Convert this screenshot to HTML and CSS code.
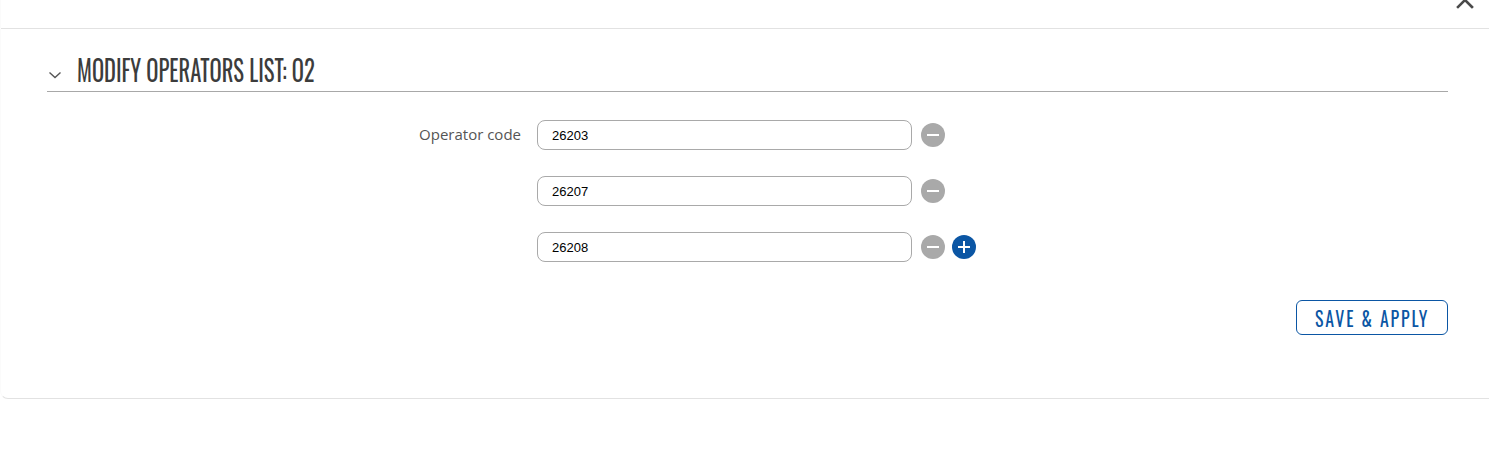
FILE: index.html
```html
<!DOCTYPE html>
<html>
<head>
<meta charset="utf-8">
<link rel="stylesheet" href="styles.css">
</head>
<body>
<div class="modal">
  <div class="modal-top">
    <button class="close" aria-label="Close">
      <svg width="20" height="20" viewBox="0 0 20 20"><path d="M3 3 L17 17 M17 3 L3 17" stroke="#4a4a4a" stroke-width="2.6" stroke-linecap="square"/></svg>
    </button>
  </div>
  <div class="modal-body">
    <div class="section-head">
      <svg class="chev" width="14" height="8" viewBox="0 0 14 8"><path d="M1.5 1.5 L7 6.5 L12.5 1.5" fill="none" stroke="#555" stroke-width="1.4"/></svg>
      <h2 class="title">MODIFY OPERATORS LIST: O2</h2>
    </div>
    <div class="form">
      <div class="row">
        <label class="label">Operator code</label>
        <div class="field">
          <input class="input" type="text" value="26203">
          <span class="btn-circle minus"></span>
        </div>
      </div>
      <div class="row">
        <label class="label"></label>
        <div class="field">
          <input class="input" type="text" value="26207">
          <span class="btn-circle minus"></span>
        </div>
      </div>
      <div class="row">
        <label class="label"></label>
        <div class="field">
          <input class="input" type="text" value="26208">
          <span class="btn-circle minus"></span>
          <span class="btn-circle plus"></span>
        </div>
      </div>
    </div>
    <div class="actions">
      <button class="save"><span class="save-text">SAVE &amp; APPLY</span></button>
    </div>
  </div>
</div>
</body>
</html>
```

FILE: styles.css
```css
html, body {
  margin: 0;
  padding: 0;
  background: #fff;
}
.modal {
  width: 1489px;
  box-sizing: border-box;
  border-bottom: 1px solid #e2e2e2;
  border-bottom-left-radius: 8px;
  border-left: 1px solid #fbfbfb;
}
.modal-top {
  height: 28px;
  border-bottom: 1px solid #e2e2e2;
  position: relative;
}
.close {
  position: absolute;
  right: 14px;
  top: -10px;
  padding: 0;
  border: 0;
  background: none;
  width: 20px;
  height: 20px;
}
.close svg { display: block; }
.modal-body {
  padding: 26px 41px 63px 46px;
}
.section-head {
  display: flex;
  align-items: center;
  height: 36px;
  border-bottom: 1px solid #a8a8a8;
}
.chev {
  margin: 3px 0 0 1px;
  flex: none;
}
.title {
  margin: 0 0 6px 15px;
  font-family: "Oswald", "Liberation Sans Narrow", "DejaVu Sans Condensed", sans-serif;
  font-weight: 400;
  font-size: 28px;
  color: #3c3c3c;
  line-height: 36px;
  white-space: nowrap;
  transform: scaleX(0.805);
  transform-origin: left center;
}
.form {
  display: flex;
  flex-direction: column;
  gap: 26px;
  padding-top: 28px;
}
.row {
  display: flex;
  align-items: center;
  gap: 16px;
  height: 30px;
}
.label {
  width: 474px;
  margin-bottom: 2px;
  text-align: right;
  font-family: "Open Sans", sans-serif;
  font-size: 15px;
  color: #555;
}
.field {
  display: flex;
  align-items: center;
  gap: 7px;
}
.input {
  box-sizing: border-box;
  width: 375px;
  height: 30px;
  border: 1px solid #a9a9a9;
  border-radius: 8px;
  padding: 0 14px;
  font-family: "Liberation Sans", Arial, sans-serif;
  font-size: 13px;
  color: #000;
  margin-right: 2px;
}
.btn-circle {
  width: 24px;
  height: 24px;
  border-radius: 50%;
  position: relative;
  flex: none;
}
.minus { background: #a9a9a9; }
.plus { background: #0b56a4; }
.btn-circle::before,
.btn-circle::after {
  content: "";
  position: absolute;
  background: #fff;
  left: 6px;
  top: 11px;
  width: 12px;
  height: 2px;
}
.minus::after { display: none; }
.plus::after {
  left: 11px;
  top: 6px;
  width: 2px;
  height: 12px;
}
.actions {
  display: flex;
  justify-content: flex-end;
  margin-top: 38px;
}
.save {
  box-sizing: border-box;
  width: 152px;
  height: 35px;
  border: 1px solid #0b56a4;
  border-radius: 6px;
  background: #fff;
  color: #0b56a4;
  padding: 0;
  display: flex;
  align-items: center;
  justify-content: center;
  overflow: hidden;
}
.save-text {
  display: inline-block;
  font-family: "Oswald", "Liberation Sans Narrow", "DejaVu Sans Condensed", sans-serif;
  font-size: 21px;
  letter-spacing: 2.2px;
  white-space: nowrap;
  transform: scaleX(0.85);
}
```
